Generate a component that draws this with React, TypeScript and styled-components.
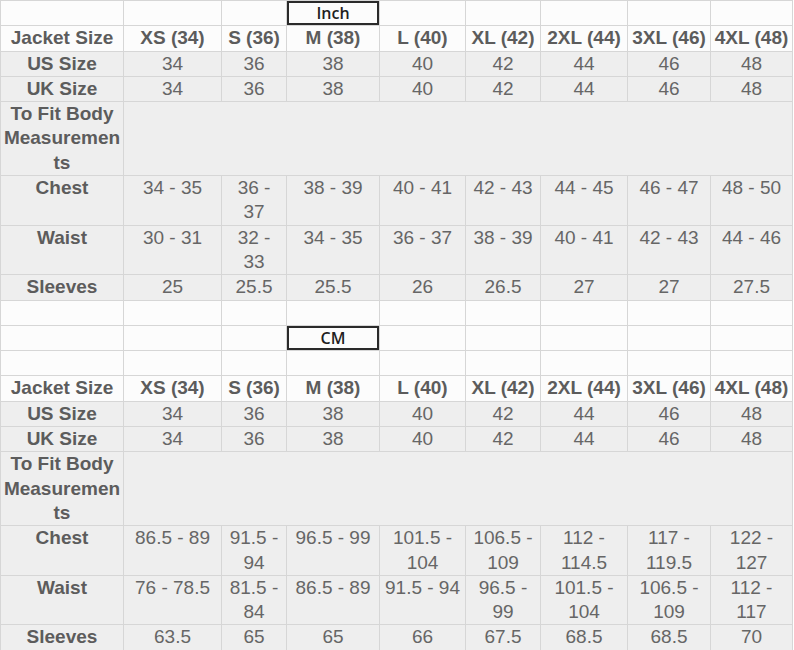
import React from "react";
import styled, { createGlobalStyle } from "styled-components";

const Global = createGlobalStyle`
  html, body { margin: 0; padding: 0; background: #ffffff; }
  body { font-family: "Liberation Sans", Arial, sans-serif; }
`;

const COLS = [123, 98, 65, 93, 86, 75, 87, 83, 82];
const SIZES = ["XS (34)", "S (36)", "M (38)", "L (40)", "XL (42)", "2XL (44)", "3XL (46)", "4XL (48)"];
const US = ["34", "36", "38", "40", "42", "44", "46", "48"];

type Section = { chest: string[]; waist: string[]; sleeves: string[] };

const INCH: Section = {
  chest: ["34 - 35", "36 - 37", "38 - 39", "40 - 41", "42 - 43", "44 - 45", "46 - 47", "48 - 50"],
  waist: ["30 - 31", "32 - 33", "34 - 35", "36 - 37", "38 - 39", "40 - 41", "42 - 43", "44 - 46"],
  sleeves: ["25", "25.5", "25.5", "26", "26.5", "27", "27", "27.5"],
};

const CM: Section = {
  chest: ["86.5 - 89", "91.5 - 94", "96.5 - 99", "101.5 - 104", "106.5 - 109", "112 - 114.5", "117 - 119.5", "122 - 127"],
  waist: ["76 - 78.5", "81.5 - 84", "86.5 - 89", "91.5 - 94", "96.5 - 99", "101.5 - 104", "106.5 - 109", "112 - 117"],
  sleeves: ["63.5", "65", "65", "66", "67.5", "68.5", "68.5", "70"],
};

const Table = styled.table`
  border-collapse: collapse;
  table-layout: fixed;
  width: 792px;
  font-family: "Liberation Sans", Arial, sans-serif;
  font-size: 19px;
  line-height: 24.3px;
`;

const Row = styled.tr<{ $tone: "white" | "gray" }>`
  background: ${(p) => (p.$tone === "gray" ? "#eeeeee" : "#fcfcfc")};
`;

const cellBase = `
  border: 1px solid #d6d6d6;
  padding: 0 4px;
  vertical-align: top;
  text-align: center;
  overflow-wrap: anywhere;
`;

const Label = styled.th`
  ${cellBase}
  padding: 0 2px;
  font-weight: 700;
  color: #5c5c5c;
`;

const Head = styled.th`
  ${cellBase}
  padding: 0;
  font-weight: 700;
  color: #5c5c5c;
  white-space: nowrap;
`;

const Value = styled.td`
  ${cellBase}
  font-weight: 400;
  color: #666666;
`;

const Empty = styled.td`
  ${cellBase}
  height: 24.3px;
`;

const Unit = styled.td`
  ${cellBase}
  box-shadow: inset 0 0 0 2px #2a2a2a;
  font-family: "Open Sans", "Liberation Sans", sans-serif;
  font-size: 16px;
  font-weight: 600;
  color: #1f1f1f;
  vertical-align: middle;
  height: 24.3px;
`;

const Span = styled.td`
  ${cellBase}
`;

const BlankRow = () => (
  <Row $tone="white">
    {COLS.map((_, i) => (
      <Empty key={i} />
    ))}
  </Row>
);

const UnitRow = ({ unit }: { unit: string }) => (
  <Row $tone="white">
    {COLS.map((_, i) =>
      i === 3 ? <Unit key={i}>{unit}</Unit> : <Empty key={i} />
    )}
  </Row>
);

const DataRow = ({ label, values }: { label: string; values: string[] }) => (
  <Row $tone="gray">
    <Label>{label}</Label>
    {values.map((v, i) => (
      <Value key={i}>{v}</Value>
    ))}
  </Row>
);

const SectionRows = ({ data }: { data: Section }) => (
  <>
    <Row $tone="white">
      <Label>Jacket Size</Label>
      {SIZES.map((s) => (
        <Head key={s}>{s}</Head>
      ))}
    </Row>
    <DataRow label="US Size" values={US} />
    <DataRow label="UK Size" values={US} />
    <Row $tone="gray">
      <Label>To Fit Body Measurements</Label>
      <Span colSpan={8} />
    </Row>
    <DataRow label="Chest" values={data.chest} />
    <DataRow label="Waist" values={data.waist} />
    <DataRow label="Sleeves" values={data.sleeves} />
  </>
);

export default function App() {
  return (
    <>
      <Global />
      <Table>
        <colgroup>
          {COLS.map((w, i) => (
            <col key={i} style={{ width: w }} />
          ))}
        </colgroup>
        <tbody>
          <UnitRow unit="Inch" />
          <SectionRows data={INCH} />
          <BlankRow />
          <UnitRow unit="CM" />
          <BlankRow />
          <SectionRows data={CM} />
        </tbody>
      </Table>
    </>
  );
}
